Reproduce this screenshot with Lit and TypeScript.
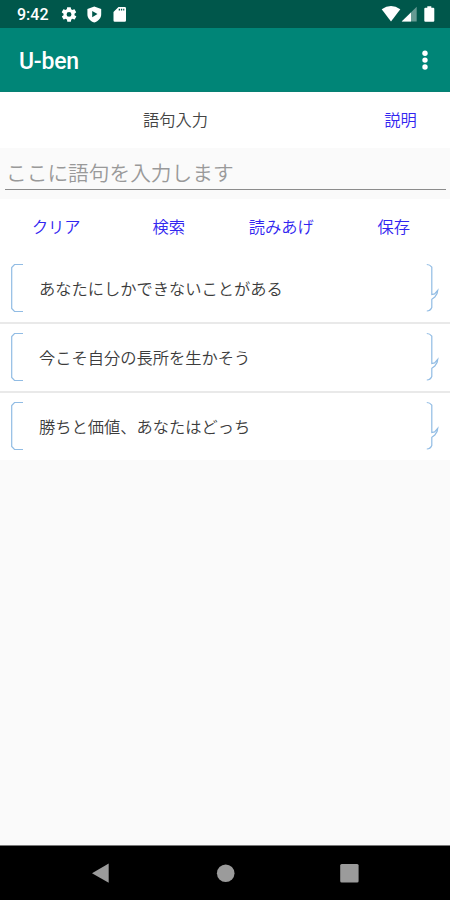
import { LitElement, html, css } from "lit";
import { customElement, property } from "lit/decorators.js";

@customElement("status-bar")
class StatusBar extends LitElement {
  static styles = css`
    :host { display: flex; height: 28px; background: #00574b; color: #fff; }
    .time { width: 44px; padding-left: 17px; font: 500 16px/30px Roboto, sans-serif; }
    svg { display: block; flex: 1; height: 28px; }
  `;
  render() {
    return html`
      <span class="time">9:42</span>
      <svg viewBox="61 0 389 28" fill="#fff">
        <path transform="translate(60.2 5.6) scale(.735)" d="M19.4 13c0-.3.1-.6.1-1s0-.7-.1-1l2.1-1.6c.2-.2.2-.4.1-.6l-2-3.500c-.1-.2-.4-.3-.6-.2l-2.500 1c-.5-.4-1.100-.7-1.700-1l-.4-2.600c0-.2-.2-.4-.5-.4h-4c-.2 0-.5.2-.5.400l-.4 2.600c-.6.300-1.200.600-1.700 1l-2.500-1c-.2-.1-.5 0-.6.200l-2 3.500c-.1.200-.1.500.1.600L4.600 11c0 .300-.1.600-.1 1s0 .7.1 1l-2.100 1.600c-.2.200-.2.400-.1.600l2 3.500c.1.200.4.300.6.200l2.500-1c.5.400 1.100.7 1.700 1l.4 2.600c0 .2.2.4.5.4h4c.2 0 .5-.2.5-.4l.4-2.600c.6-.3 1.200-.6 1.700-1l2.500 1c.2.1.5 0 .6-.2l2-3.500c.1-.2.1-.5-.1-.6zM12 15.300a3.300 3.300 0 1 1 0-6.600 3.300 3.300 0 0 1 0 6.600z"/>
        <path fill-rule="evenodd" d="M94.300 6.400l6.900 2.700v5.100c0 3.800-2.700 6.900-6.900 8.300-4.200-1.400-6.900-4.500-6.900-8.300V9.100zM92.200 10.900v6.400l5.300-3.200z"/>
        <path fill-rule="evenodd" d="M118.500 7h6.200q1.300 0 1.300 1.300v12.200q0 1.300-1.300 1.300h-9.900q-1.300 0-1.300-1.300V12zM118.700 8.700v1.700h1.400V8.700zM121 8.700v1.700h1.200V8.700zM123.200 8.700v1.700h1.100V8.700z"/>
        <path d="M381.700 9.300Q391 2.900 400.300 9.300L391 21.500z"/>
        <path opacity=".4" d="M416.700 6.800v14.700h-15z"/>
        <path d="M411 12.400v9.100h-9.300z"/>
        <path d="M427.300 6.200h4v1.500h1.900q1.100 0 1.100 1.100v11.900q0 1.100-1.100 1.100h-7.800q-1.100 0-1.100-1.100V8.800q0-1.100 1.100-1.100h1.900z"/>
      </svg>`;
  }
}

@customElement("app-bar")
class AppBar extends LitElement {
  static styles = css`
    :host { display: flex; align-items: center; justify-content: space-between; box-sizing: border-box;
      height: 64px; padding: 2px 18px 0 19px; background: #008577; border-bottom: 1px solid #078073; }
    .title { padding-top: 2px; color: #fff; font: 500 23px/30px Roboto, sans-serif; letter-spacing: -.2px; }
    svg { display: block; width: 14px; height: 24px; margin-top: -1px; }
  `;
  render() {
    return html`
      <span class="title">U-ben</span>
      <svg viewBox="0 0 14 24" fill="#fff">
        <circle cx="7" cy="5.200" r="2.700"/><circle cx="7" cy="12.100" r="2.700"/><circle cx="7" cy="19" r="2.700"/>
      </svg>`;
  }
}

@customElement("phrase-row")
class PhraseRow extends LitElement {
  @property() text = "";
  static styles = css`
    :host { display: flex; box-sizing: border-box; height: 67px; padding-bottom: 2px; align-items: center; background: #fff; }
    svg { display: block; height: 50px; flex: none; fill: none; stroke: #91bce4; stroke-width: 1.200; }
    .left { width: 39px; }
    .right { width: 40px; }
    .text { flex: 1; color: #3c3c3c; line-height: 24px; white-space: nowrap; }
  `;
  render() {
    return html`
      <svg class="left" viewBox="0 0 39 50"><path d="M23 1.500h-8.500L11.700 4.500v41l2.800 3H23"/></svg>
      <span class="text">${this.text}</span>
      <svg class="right" viewBox="0 0 40 50">
        <path d="M16.800 1.500q3 0 5 2.600V31.500l2.800-.6 3.100-3.500-.6 3-2.300 3.600-3 2.200V44.500q-1.500 3.500-5 3.500"/>
      </svg>`;
  }
}

@customElement("nav-bar")
class NavBar extends LitElement {
  static styles = css`
    :host { display: block; height: 54px; background: #000; border-top: 1px solid #777; }
    svg { display: block; width: 450px; height: 54px; }
  `;
  render() {
    return html`
      <svg viewBox="0 0 450 54" fill="#9b9b9b">
        <path d="M92 27.200L108.700 17.600v19.200z"/>
        <circle cx="225.700" cy="27.300" r="8.800"/>
        <rect x="340.200" y="18" width="18.400" height="18.600" rx="1.500"/>
      </svg>`;
  }
}

@customElement("app-root")
class AppRoot extends LitElement {
  static styles = css`
    :host { display: flex; flex-direction: column; width: 450px; height: 900px; overflow: hidden;
      background: #fafafa; font: 350 16.250px/24px "Noto Sans CJK JP", sans-serif; }
    .head { display: grid; grid-template-columns: 351px 99px; align-items: center; text-align: center;
      box-sizing: border-box; height: 56px; padding-bottom: 2px; background: #fff; color: #444; }
    .link { color: #3226f0; }
    .entry { box-sizing: border-box; height: 51px; padding: 8px 4px 0 5px; }
    .field { box-sizing: border-box; height: 34px; border-bottom: 1px solid #8c8c8c; padding-left: 1px;
      color: #999; font-size: 20.700px; line-height: 32px; }
    .actions { display: grid; grid-template-columns: repeat(4, 1fr); align-items: center; text-align: center;
      box-sizing: border-box; height: 56px; padding-bottom: 2px; background: #fff; }
    .list { display: flex; flex-direction: column; gap: 2px; background: #e9e9e9; }
    .space { flex: 1; }
  `;
  render() {
    const actions = ["クリア", "検索", "読みあげ", "保存"];
    const phrases = ["あなたにしかできないことがある", "今こそ自分の長所を生かそう", "勝ちと価値、あなたはどっち"];
    return html`
      <status-bar></status-bar>
      <app-bar></app-bar>
      <div class="head"><span>語句入力</span><span class="link">説明</span></div>
      <div class="entry"><div class="field">ここに語句を入力します</div></div>
      <div class="actions">${actions.map((a) => html`<span class="link">${a}</span>`)}</div>
      <div class="list">${phrases.map((p) => html`<phrase-row .text=${p}></phrase-row>`)}</div>
      <div class="space"></div>
      <nav-bar></nav-bar>`;
  }
}
